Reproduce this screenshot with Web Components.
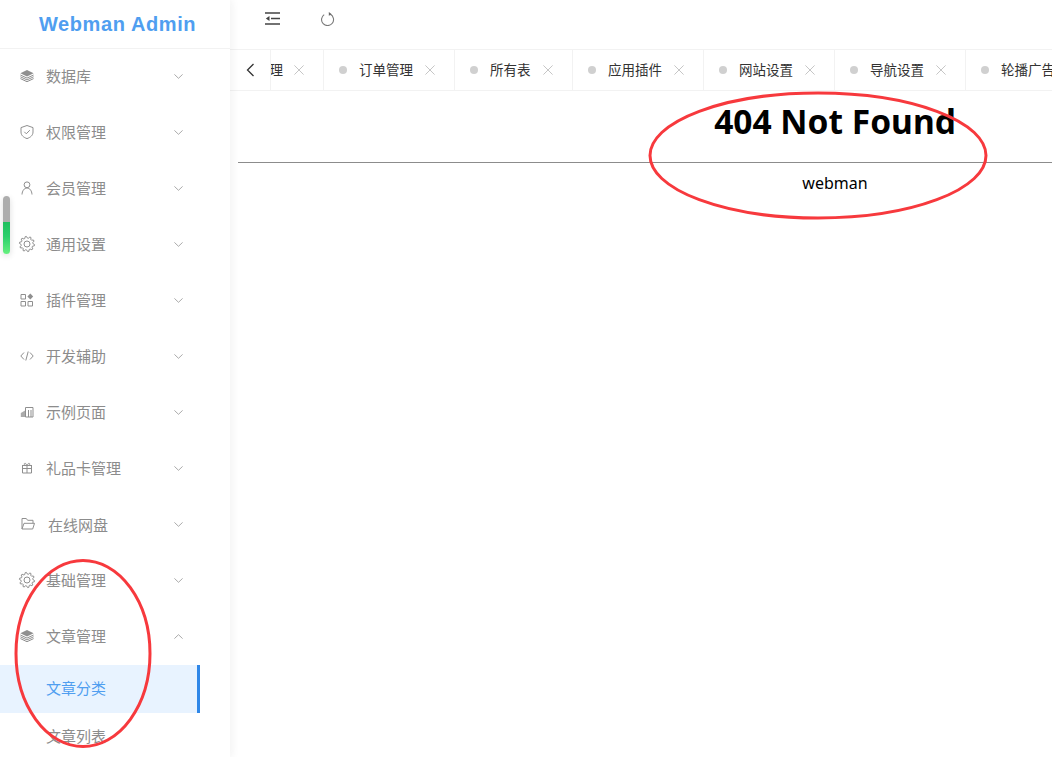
<!DOCTYPE html>
<html lang="zh-CN">
<head>
<meta charset="utf-8">
<title>Webman Admin</title>
<style>
html,body{margin:0;padding:0;height:100%;overflow:hidden;background:#fff}
body{font-family:"Liberation Sans","Noto Sans CJK SC",sans-serif}
</style>
</head>
<body>
<admin-app>
  <admin-sidebar slot="side">
    <menu-item icon="layers">数据库</menu-item>
    <menu-item icon="shield">权限管理</menu-item>
    <menu-item icon="user">会员管理</menu-item>
    <menu-item icon="gear">通用设置</menu-item>
    <menu-item icon="apps">插件管理</menu-item>
    <menu-item icon="code">开发辅助</menu-item>
    <menu-item icon="blocks">示例页面</menu-item>
    <menu-item icon="gift">礼品卡管理</menu-item>
    <menu-item icon="folder" shift>在线网盘</menu-item>
    <menu-item icon="gear">基础管理</menu-item>
    <menu-item icon="layers" open>文章管理</menu-item>
    <menu-item sub active>文章分类</menu-item>
    <menu-item sub>文章列表</menu-item>
  </admin-sidebar>
  <admin-header slot="main"></admin-header>
  <tab-strip slot="main">
    <tab-item partial>理</tab-item>
    <tab-item>订单管理</tab-item>
    <tab-item>所有表</tab-item>
    <tab-item>应用插件</tab-item>
    <tab-item>网站设置</tab-item>
    <tab-item>导航设置</tab-item>
    <tab-item>轮播广告</tab-item>
  </tab-strip>
  <not-found slot="main"></not-found>
  <page-marks slot="over"></page-marks>
</admin-app>
<script>
function gearPath(){
  const n=10,pts=[];
  for(let i=0;i<n*4;i++){
    const a=(i+.5)/(n*4)*Math.PI*2,r=(i%4<2)?7.600:5.900;
    pts.push((7+r*Math.cos(a)).toFixed(2)+' '+(7+r*Math.sin(a)).toFixed(2));
  }
  return 'M'+pts.join('L')+'Z';
}
const ICONS={
layers:'<path d="M7 1 13.600 4.300 7 7.400 .4 4.300Z" fill="currentColor"/><path d="M.4 6 7 9.100 13.600 6M.4 7.800 7 10.900l6.600-3.100M.4 9.600 7 12.700l6.600-3.100" fill="none" stroke="currentColor" stroke-width="1"/>',
shield:'<path d="M7 .5 13 2.600V7c0 3.400-2.600 5.400-6 6.600C3.600 12.400 1 10.400 1 7V2.600Z" fill="none" stroke="currentColor" stroke-width="1"/><path d="M4.300 6.800 6.300 8.800 9.800 5.200" fill="none" stroke="currentColor" stroke-width="1"/>',
user:'<circle cx="7" cy="3.800" r="2.900" fill="none" stroke="currentColor" stroke-width="1"/><path d="M2 13.500C2.200 9.800 4.200 7 7 7s4.800 2.800 5 6.500" fill="none" stroke="currentColor" stroke-width="1"/>',
gear:'<path d="'+gearPath()+'" fill="none" stroke="currentColor" stroke-width="1" stroke-linejoin="round"/><circle cx="7" cy="7" r="3" fill="none" stroke="currentColor" stroke-width="1"/>',
apps:'<path d="M1 1.500h4.500v4.500H1ZM1 8.500h4.500V13H1ZM8 8.500h4.500V13H8Z" fill="none" stroke="currentColor" stroke-width="1"/><path d="M10.300 .6 13.200 3.500 10.300 6.400 7.400 3.500Z" fill="currentColor"/>',
code:'<path d="M4 3.500.8 7 4 10.500M10 3.500 13.200 7 10 10.500M8.200 2.500 5.800 11.500" fill="none" stroke="currentColor" stroke-width="1"/>',
blocks:'<path d="M5.500 2.500h7.500v9.500H5.500ZM8.500 5v7M11 5v7" fill="none" stroke="currentColor" stroke-width="1"/><path d="M.8 8 5 5.500V12H.8Z" fill="currentColor" opacity=".75"/>',
gift:'<path d="M2.500 4.500h9V12h-9ZM2 4.500h10M7 4.500V12M2.500 7.500h9" fill="none" stroke="currentColor" stroke-width="1"/><path d="M7 4.500C5 4.500 4 3.800 4.300 2.700 4.700 1.800 6.300 2.300 7 4.500c.7-2.200 2.300-2.700 2.700-1.800C10 3.800 9 4.500 7 4.500Z" fill="none" stroke="currentColor" stroke-width=".9"/>',
folder:'<path d="M1 12V1.500h4.300l1.300 1.800h5.400v3M1 12l2-5.700h10.500L11.700 12Z" fill="none" stroke="currentColor" stroke-width="1"/>'
};
function shadow(el,html){el.attachShadow({mode:'open'}).innerHTML=html;}

customElements.define('admin-app',class extends HTMLElement{constructor(){super();shadow(this,`
<style>
:host{display:flex;position:relative;height:100vh;width:100%;overflow:hidden}
.main{flex:1;min-width:0;display:flex;flex-direction:column;overflow:hidden;background:#fff}
</style>
<slot name="side"></slot>
<div class="main"><slot name="main"></slot></div>
<slot name="over"></slot>`);}});

customElements.define('admin-sidebar',class extends HTMLElement{constructor(){super();shadow(this,`
<style>
:host{display:flex;flex-direction:column;flex:none;width:230px;height:100%;box-sizing:border-box;background:#fff;box-shadow:2px 0 8px rgba(29,35,41,.06);position:relative;z-index:2;overflow:hidden}
.logo{flex:none;height:48px;padding-left:5px;border-bottom:1px solid #f2f2f2;display:flex;align-items:center;justify-content:center;font:bold 20px "Liberation Sans",sans-serif;color:#4f9ef0;letter-spacing:.6px}
.menu{width:200px;display:flex;flex-direction:column}
</style>
<div class="logo">Webman Admin</div>
<div class="menu"><slot></slot></div>`);}});

customElements.define('menu-item',class extends HTMLElement{constructor(){super();
 const sub=this.hasAttribute('sub'),ic=this.getAttribute('icon'),open=this.hasAttribute('open');
 const chev=sub?'':`<svg class="chev" width="9" height="5" viewBox="0 0 9 5">${open?'<path d="M.4 4.600 4.500 .7l4.100 3.900"':'<path d="M.4.400 4.500 4.300 8.600.400"'} fill="none" stroke="currentColor" stroke-width=".9"/></svg>`;
 shadow(this,`
<style>
:host{display:flex;flex:none;align-items:center;box-sizing:border-box;height:56px;padding:0 17px 0 20px;color:#8c8c8c;font:15px/20px "Noto Sans CJK SC","Liberation Sans",sans-serif}
:host([sub]){height:48px;padding-left:46px}
:host([active]){background:#e8f3ff;color:#4f9ef0;box-shadow:inset -3px 0 0 #2f87e8}
:host([shift]) .label{margin-left:13px;padding:0 0 1px}
:host([shift]) svg.ic{margin-left:1px}
svg.ic{flex:none;color:#8f8f8f;margin-bottom:2px;overflow:visible}
.label{margin-left:12px;flex:1;padding-bottom:2px}
:host([sub]) .label{margin-left:0}
.chev{flex:none;color:#a0a0a0;margin-bottom:2px}
</style>
${ic?`<svg class="ic" width="14" height="14" viewBox="0 0 14 14">${ICONS[ic]}</svg>`:''}
<span class="label"><slot></slot></span>${chev}`);}});

customElements.define('admin-header',class extends HTMLElement{constructor(){super();shadow(this,`
<style>
:host{display:flex;flex:none;align-items:flex-start;box-sizing:border-box;height:49px;padding:12px 0 0 35px;gap:41px}
svg{display:block;flex:none}
</style>
<svg width="15" height="13" viewBox="0 0 15 13"><path d="M0 1h15M6 6.500h9M0 12h15" fill="none" stroke="#444" stroke-width="1.400"/><path d="M4.500 4 .8 6.500 4.500 9Z" fill="#444"/></svg>
<svg width="14" height="14" viewBox="0 0 14 14"><path d="M9.400 2.300A6 6 0 1 1 3.200 2.600" fill="none" stroke="#7a7a7a" stroke-width="1.100"/><path d="M7.800 0 10.800 2.300 7.800 3.800Z" fill="#666"/></svg>`);}});

customElements.define('tab-strip',class extends HTMLElement{constructor(){super();shadow(this,`
<style>
:host{display:flex;flex:none;box-sizing:border-box;height:42px;border-top:1px solid #f2f2f2;border-bottom:1px solid #f2f2f2;overflow:hidden}
.back{flex:none;width:41px;box-sizing:border-box;border-right:1px solid #f2f2f2;display:flex;align-items:center;justify-content:flex-end;padding-right:15px}
.track{display:flex;flex:1;min-width:0;overflow:hidden}
</style>
<div class="back"><svg width="9" height="14" viewBox="0 0 9 14"><path d="M7.500 1 1.500 7l6 6" fill="none" stroke="#333" stroke-width="1.300"/></svg></div>
<div class="track"><slot></slot></div>`);}});

customElements.define('tab-item',class extends HTMLElement{constructor(){super();shadow(this,`
<style>
:host{display:flex;flex:none;align-items:center;box-sizing:border-box;padding:0 19px 0 15px;border-right:1px solid #f2f2f2;color:#333;font:13.5px/20px "Noto Sans CJK SC","Liberation Sans",sans-serif}
:host([partial]){padding-left:0;margin-left:-1.500px}
.dot{flex:none;width:8px;height:8px;border-radius:50%;background:#d0d0d0;margin-right:12px}
:host([partial]) .dot{display:none}
.t{display:block;min-width:41px;padding-bottom:2px}
:host([partial]) .t{min-width:0}
svg{flex:none;margin-left:12px}
:host([partial]) svg{margin-left:11px}
</style>
<span class="dot"></span><span class="t"><slot></slot></span>
<svg width="10" height="10" viewBox="0 0 10 10"><path d="M.4 .4 9.600 9.600M9.600 .4 .4 9.600" fill="none" stroke="#c6c6c6" stroke-width="1"/></svg>`);}});

customElements.define('not-found',class extends HTMLElement{constructor(){super();shadow(this,`
<style>
:host{display:block;flex:1;min-height:0;padding:0 0 0 8px;color:#000;font-family:"Noto Sans","Liberation Sans",sans-serif;overflow:hidden}
.page{width:1194px;text-align:center;padding-top:8px}
h1{margin:0;font-size:33.500px;line-height:44px;font-weight:700}
hr{margin:19px 0 0;border:0;border-top:1px solid #8c8c8c}
p{margin:9px 0 0;font-size:16px;line-height:22px}
</style>
<div class="page"><h1>404 Not Found</h1><hr><p>webman</p></div>`);}});

customElements.define('page-marks',class extends HTMLElement{constructor(){super();shadow(this,`
<style>
:host{display:block;position:absolute;inset:0;pointer-events:none;z-index:5}
svg{position:absolute;left:0;top:0}
.thumb{position:absolute;left:3px;top:196px;width:7px;height:58px;border-radius:4px;background:linear-gradient(#adadad 0,#adadad 45%,#1fbf5f 45%,#2ccf6c 70%,#66f07f 100%);box-shadow:0 2px 6px rgba(0,0,0,.14)}
</style>
<div class="thumb"></div>
<svg width="1052" height="757" viewBox="0 0 1052 757"><g fill="none" stroke="#f7393d" stroke-width="3"><ellipse cx="818" cy="155.500" rx="168" ry="62.500"/><ellipse cx="83" cy="653.500" rx="67" ry="93"/></g></svg>`);}});
</script>
</body>
</html>
